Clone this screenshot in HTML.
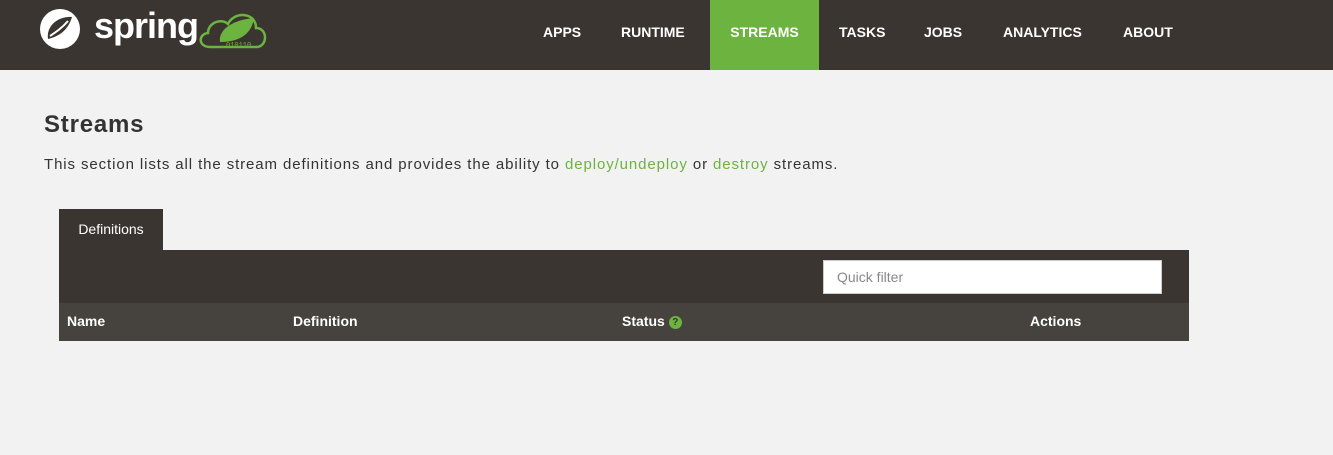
<!DOCTYPE html>
<html><head><meta charset="utf-8"><style>
*{margin:0;padding:0;box-sizing:border-box}
body{width:1333px;height:455px;background:#f2f2f2;font-family:"Liberation Sans",sans-serif;overflow:hidden;position:relative}
.nav{position:absolute;left:0;top:0;width:1333px;height:70px;background:#3a3530}
.nav a{position:absolute;top:0;height:70px;line-height:64px;color:#fff;font-weight:bold;font-size:14px;text-decoration:none}
.act{background:#6db33f;text-align:center}
h1{position:absolute;left:44px;top:111px;font-size:24px;font-weight:600;letter-spacing:0.8px;color:#333}
p{position:absolute;left:44px;top:156px;font-size:15px;letter-spacing:0.9px;color:#333}
p span{color:#6db33f}
.tab{position:absolute;left:59px;top:209px;width:104px;height:41px;background:#3a3530;color:#fff;font-size:14px;text-align:center;line-height:40px}
.bar{position:absolute;left:59px;top:250px;width:1130px;height:53px;background:#3a3530}
.inp{position:absolute;left:823px;top:260px;width:339px;height:34px;background:#fff;border:1px solid #ccc;color:#888;font-size:14px;line-height:32px;padding-left:13px}
.th{position:absolute;left:59px;top:303px;width:1130px;height:38px;background:#46423d;color:#fff;font-weight:bold;font-size:14px}
.th div{position:absolute;top:10px}
.q{display:inline-block;width:13px;height:13px;border-radius:50%;background:#6db33f;color:#3a3530;font-size:10px;text-align:center;line-height:13px;vertical-align:1px;margin-left:4px}
</style></head><body>
<div class="nav">
<svg style="position:absolute;left:38px;top:6px" width="235" height="46" viewBox="0 0 235 46">
<circle cx="22" cy="23" r="20" fill="#fff"/>
<path d="M10 33 C8 20 20 10 34 11 C30 24 22 30 10 33Z" fill="#3a3530"/>
<path d="M12 30 C18 26 24 22 30 15" stroke="#fff" stroke-width="2" fill="none"/>
<text x="56" y="32" fill="#fff" font-family="Liberation Sans,sans-serif" font-size="36" font-weight="bold" letter-spacing="-1">spring</text>
<path d="M172 41 C160 41 160 28 170 27 C170 16 184 12 190 18 C196 5 218 6 218 22 C230 22 230 41 218 41Z" fill="none" stroke="#6db33f" stroke-width="2.5"/>
<path d="M182 36 C180 24 194 14 216 12 C214 26 204 36 182 36Z" fill="#6db33f"/>
<text x="188" y="41" fill="#6db33f" font-size="7" font-family="Liberation Mono,monospace">010110</text>
</svg>
<a style="left:543px">APPS</a>
<a style="left:621px">RUNTIME</a>
<a class="act" style="left:710px;width:109px">STREAMS</a>
<a style="left:839px">TASKS</a>
<a style="left:924px">JOBS</a>
<a style="left:1003px">ANALYTICS</a>
<a style="left:1123px">ABOUT</a>
</div>
<h1>Streams</h1>
<p>This section lists all the stream definitions and provides the ability to <span>deploy/undeploy</span> or <span>destroy</span> streams.</p>
<div class="tab">Definitions</div>
<div class="bar"></div>
<div class="inp">Quick filter</div>
<div class="th">
<div style="left:8px">Name</div>
<div style="left:234px">Definition</div>
<div style="left:563px">Status<span class="q">?</span></div>
<div style="left:971px">Actions</div>
</div>
</body></html>
